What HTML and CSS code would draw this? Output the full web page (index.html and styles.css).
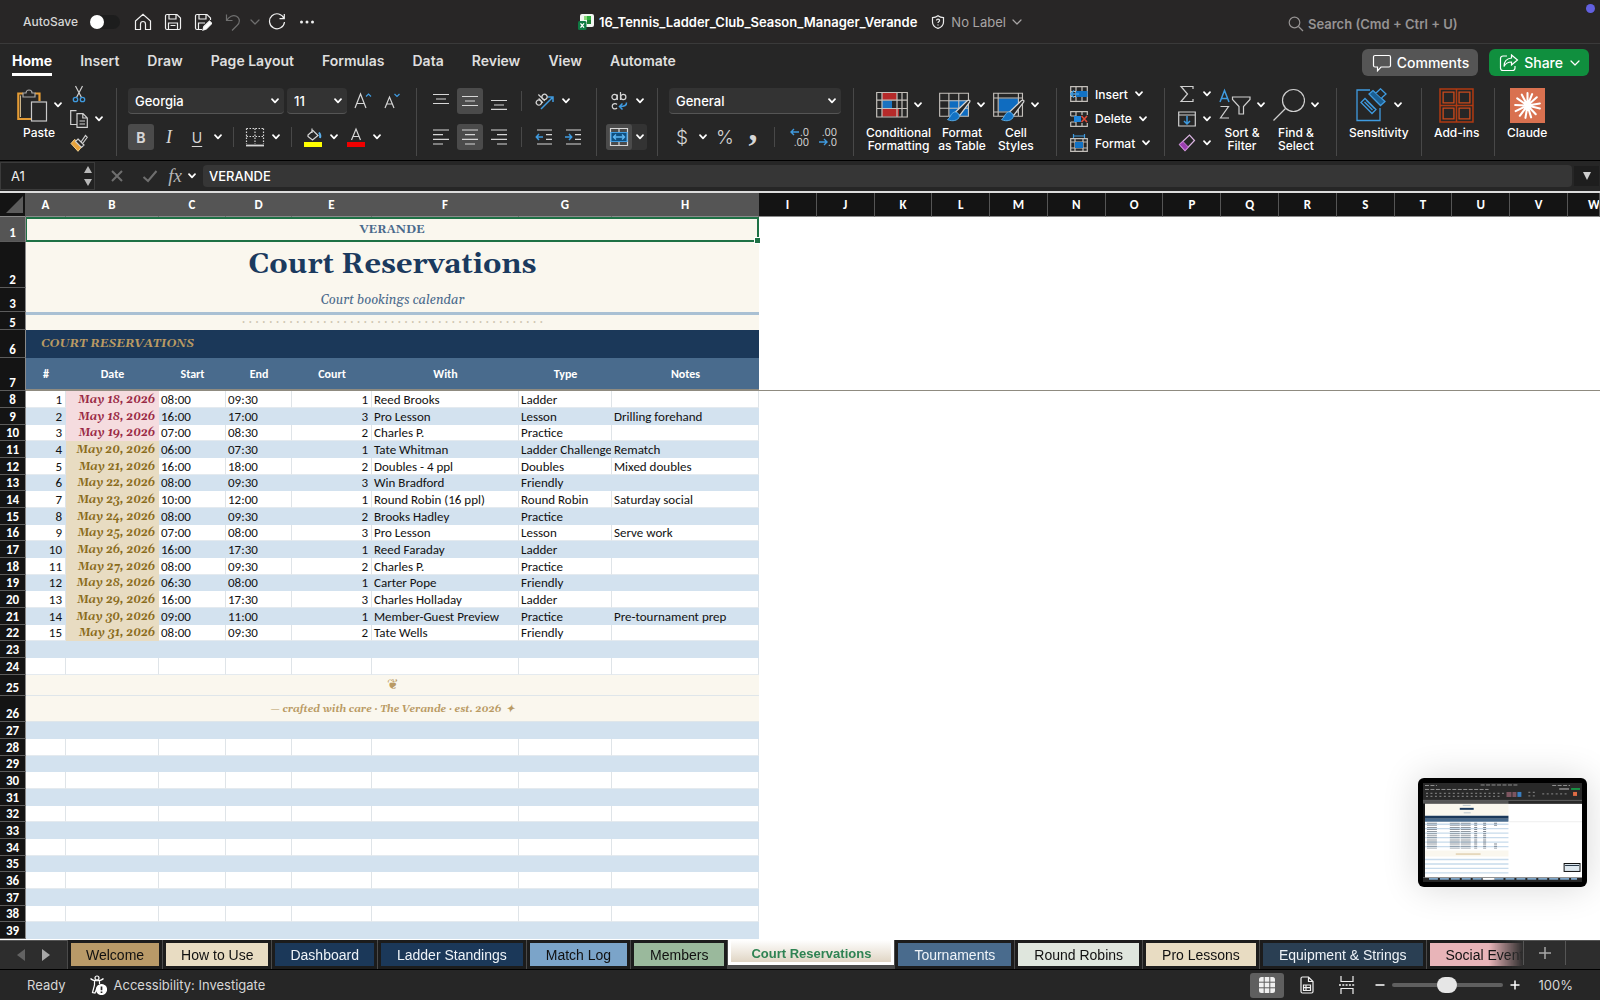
FILE: index.html
```html
<!DOCTYPE html>
<html lang="en">
<head>
<meta charset="utf-8">
<title>16_Tennis_Ladder_Club_Season_Manager_Verande</title>
<link rel="stylesheet" href="styles.css">
</head>
<body>
<svg class="sprite" aria-hidden="true">
  <symbol id="chev" viewBox="0 0 8 6"><path d="M1 1.2 4 4.4 7 1.2" fill="none" stroke="currentColor" stroke-width="1.7" stroke-linecap="round" stroke-linejoin="round"/></symbol>
  <symbol id="chev-thin" viewBox="0 0 10 6"><path d="M1 1 5 5 9 1" fill="none" stroke="currentColor" stroke-width="1.2" stroke-linecap="round" stroke-linejoin="round"/></symbol>
  <symbol id="brush" viewBox="0 0 26 24"><path d="M9 14 L22 1.5 C24 0 25.500 1 24.500 3 L14 17 Z" fill="#262626" stroke="#d4d4d4" stroke-width="1.3"/><path d="M8 13.500 C11 13 14 15.500 13.500 18.500 C12.500 22.500 6 24 1 21.500 C4 20.500 4 15 8 13.500 Z" fill="#1272c4" stroke="#5aaeea" stroke-width="1"/></symbol>
</svg>

<header class="titlebar">
  <div class="quick">
    <label class="autosave">AutoSave <input type="checkbox" role="switch" class="switch"></label>
    <button class="qbtn" aria-label="Home"><svg viewBox="0 0 18 18" class="i18"><path d="M1.500 8 9 1.200 16.500 8V16.500H11.500V11a2.500 2.500 0 0 0-5 0V16.500H1.500Z"/></svg></button>
    <button class="qbtn" aria-label="Save"><svg viewBox="0 0 18 18" class="i18"><path d="M1.500 3a1.500 1.500 0 0 1 1.500-1.500H13L16.500 5V15a1.500 1.500 0 0 1-1.500 1.500H3A1.500 1.500 0 0 1 1.500 15ZM5 1.500V6H12V1.500M4.500 16.500V10H13.500V16.500M6.500 12.500H11.500"/></svg></button>
    <button class="qbtn" aria-label="Save As"><svg viewBox="0 0 18 18" class="i18"><path d="M8 16.500H3A1.500 1.500 0 0 1 1.500 15V3A1.500 1.500 0 0 1 3 1.500H13L16.500 5V7M5 1.500V6H12V1.500M4.500 16.500V10H11"/><path d="M9 17 9.800 13.500 15.500 8l2.300 2.300-5.600 5.600Z" fill="#fff"/></svg></button>
    <button class="qbtn dim" aria-label="Undo"><svg viewBox="0 0 18 18" class="i18"><path d="M2.500 1.500V7.500H8.500M2.800 7.200C5 3.500 9 1.500 12.500 3.200 16.500 5.500 16 10 13 12.500L8 17.500"/></svg></button>
    <svg class="chev-w dim"><use href="#chev-thin"/></svg>
    <button class="qbtn" aria-label="Redo"><svg viewBox="0 0 18 18" class="i18"><path d="M16 5.500A7.500 7.500 0 1 0 16.500 9M16.300 1V5.700H11.500"/></svg></button>
    <button class="qbtn" aria-label="More"><svg viewBox="0 0 18 18" class="i18 solid"><circle cx="3.500" cy="9" r="1.500"/><circle cx="9" cy="9" r="1.500"/><circle cx="14.500" cy="9" r="1.500"/></svg></button>
  </div>
  <div class="doc">
    <svg viewBox="0 0 16 16" class="i16 plain"><rect x="2" y="0" width="14" height="13" rx="2" fill="#f2f6f2"/><path d="M6 2H13V10H9V6H6Z" fill="#2fae3f"/><path d="M9 6H13V10H9Z" fill="#1c7f31"/><path d="M6 2H9V6H6Z" fill="#8bd87b"/><rect x="0" y="7" width="8.500" height="9" rx="1.500" fill="#0f7a43"/><path d="M2.500 9.300 6 13.700M6 9.300 2.500 13.700" stroke="#fff" stroke-width="1.300"/></svg>
    <span class="doc-name">16_Tennis_Ladder_Club_Season_Manager_Verande</span>
    <button class="label-btn"><svg viewBox="0 0 14 14" class="i14"><path d="M7 .8C9 2.300 10.500 2.600 12.500 2.600V7C12.500 10.500 10 12.500 7 13.400 4 12.500 1.500 10.500 1.500 7V2.600C3.500 2.600 5 2.300 7 .8ZM5.500 5.500C5.500 3.700 8.600 3.800 8.500 5.600 8.400 6.700 7 6.600 7 8M7 9.500V10.500"/></svg>No Label<svg class="chev-w"><use href="#chev-thin"/></svg></button>
  </div>
  <label class="search"><svg viewBox="0 0 16 16" class="i16"><circle cx="6.500" cy="6.500" r="5.300"/><path d="M10.500 10.500 15 15"/></svg><input type="search" aria-label="Search" placeholder="Search (Cmd + Ctrl + U)"></label>
  <span class="rec-dot"></span>
</header>

<nav class="menubar">
  <div class="menus">
    <a href="#home" class="current">Home</a><a href="#insert">Insert</a><a href="#draw">Draw</a><a href="#layout">Page Layout</a><a href="#formulas">Formulas</a><a href="#data">Data</a><a href="#review">Review</a><a href="#view">View</a><a href="#automate">Automate</a>
  </div>
  <div class="menu-actions">
    <button class="pill grey"><svg viewBox="0 0 20 18" class="i20"><path d="M3 1.500H17A1.500 1.500 0 0 1 18.500 3V11.500A1.500 1.500 0 0 1 17 13H9L5.500 16.800V13H3A1.500 1.500 0 0 1 1.500 11.500V3A1.500 1.500 0 0 1 3 1.500Z"/></svg>Comments</button>
    <button class="pill green"><svg viewBox="0 0 20 18" class="i20"><path d="M8 2H4A2.500 2.500 0 0 0 1.500 4.500V14A2.500 2.500 0 0 0 4 16.500H13.500A2.500 2.500 0 0 0 16 14V12M12.500 1 18.500 6 12.500 11V8C9 8 6.500 9.500 5 12.500 5 7.500 8 4.500 12.500 4Z"/></svg>Share<svg class="chev-w"><use href="#chev-thin"/></svg></button>
  </div>
</nav>

<section class="ribbon" aria-label="Home ribbon">
  <div class="group g-clip">
    <button class="big"><span class="big-row"><svg viewBox="0 0 32 34" class="ibig"><path d="M7 5.500H2.300V31H15M19 5.500H23.500V13" fill="none" stroke="#e39b35" stroke-width="2.200"/><path d="M4.500 7.500V29" stroke="#f6d9a4" stroke-width=".8"/><path d="M7 9V5H10A3 3 0 0 1 16 5H19V9Z" fill="#262626" stroke="#a8a8a8" stroke-width="1.200"/><rect x="15.500" y="14" width="15" height="19" fill="#262626" stroke="#c9c9c9" stroke-width="1.200"/></svg><svg class="chev"><use href="#chev"/></svg></span>Paste</button>
    <div class="stack">
      <button class="mini" aria-label="Cut"><svg viewBox="0 0 18 18" class="i18 plain"><path d="M5.500 1 11.500 12.500M12.500 1 6.500 12.500" stroke="#d0d0d0" stroke-width="1.200"/><circle cx="5.500" cy="14.500" r="2.200" fill="none" stroke="#3f9be0" stroke-width="1.300"/><circle cx="12.500" cy="14.500" r="2.200" fill="none" stroke="#3f9be0" stroke-width="1.300"/></svg></button>
      <button class="mini" aria-label="Copy"><svg viewBox="0 0 18 18" class="i18"><path d="M6.500 14.500H.7V.7H6.500M7 3.700H13L17.300 8V17.300H7ZM12.800 4V8H17M9.500 11H15M9.500 14H15"/></svg><svg class="chev"><use href="#chev"/></svg></button>
      <button class="mini" aria-label="Format Painter"><svg viewBox="0 0 18 18" class="i18 plain"><path d="M8 8 4.500 5.500 1 9.500 8 17.300 11.500 13Z" fill="#e8a33c" stroke="#f3d08b" stroke-width="1"/><path d="M8 5 14 11 11.500 13.500 5.500 7.500ZM11 8 15.500 1.500 17.300 3.300 13 9" fill="#262626" stroke="#d0d0d0" stroke-width="1.200"/></svg></button>
    </div>
  </div>

  <div class="group two-row g-font">
    <div class="row">
      <label class="pick w156"><select aria-label="Font"><option>Georgia</option></select><svg class="chev"><use href="#chev"/></svg></label>
      <label class="pick w60"><select aria-label="Font size"><option>11</option></select><svg class="chev"><use href="#chev"/></svg></label>
      <button class="tool" aria-label="Increase font size"><svg viewBox="0 0 20 20" class="i20"><path d="M2 17 7.500 3 13 17M4 12.500H11"/><path d="M13 5.500 15.500 3 18 5.500" stroke="#3f9be0"/></svg></button>
      <button class="tool" aria-label="Decrease font size"><svg viewBox="0 0 20 20" class="i20"><path d="M3 17 7.500 6 12 17M4.600 13H10.400"/><path d="M12.500 3 15 5.500 17.500 3" stroke="#3f9be0"/></svg></button>
    </div>
    <div class="row tight">
      <button class="tool on g-bold">B</button>
      <button class="tool g-ital">I</button>
      <button class="tool g-under">U</button><svg class="chev"><use href="#chev"/></svg>
      <i class="vr"></i>
      <button class="tool" aria-label="Borders"><svg viewBox="0 0 20 20" class="i20"><path d="M1.500 1.500H18.500M1.500 9.500H18.500M1.500 1.500V17M10 1.500V17M18.500 1.500V17" stroke-dasharray="1.500 1.500"/><path d="M1 18.500H19" stroke-width="1.800"/></svg></button><svg class="chev"><use href="#chev"/></svg>
      <i class="vr"></i>
      <button class="tool" aria-label="Fill color"><svg viewBox="0 0 20 20" class="i20"><path d="M9 1.500V6M5 8 10 3.500 15 8.500 9.500 13 5 9.500Z"/><path d="M16 5.500Q18 8 17 11" stroke="#5aaeea" stroke-width="2"/><path d="M1 15H19V20H1Z" fill="#ff0" stroke="none"/></svg></button><svg class="chev"><use href="#chev"/></svg>
      <button class="tool" aria-label="Font color"><svg viewBox="0 0 20 20" class="i20"><path d="M5.500 13 10 2 14.500 13M7 9.500H13"/><path d="M1 15H19V20H1Z" fill="#f00000" stroke="none"/></svg></button><svg class="chev"><use href="#chev"/></svg>
    </div>
  </div>

  <div class="group two-row g-align">
    <div class="row">
      <button class="tool" aria-label="Top align"><svg viewBox="0 0 18 18" class="i18"><path d="M1 2.500H17M4 7H14M1 11.500H17"/></svg></button>
      <button class="tool on" aria-label="Middle align"><svg viewBox="0 0 18 18" class="i18"><path d="M1 4.500H17M4 9H14M1 13.500H17"/></svg></button>
      <button class="tool" aria-label="Bottom align"><svg viewBox="0 0 18 18" class="i18"><path d="M1 8.500H17M4 13H14M1 17.300H17"/></svg></button>
      <i class="vr"></i>
      <button class="tool" aria-label="Orientation"><svg viewBox="0 0 20 20" class="i20"><g transform="rotate(-45 7 8)"><circle cx="3" cy="9" r="2.600"/><path d="M5.700 6V12M8.300 3V12"/><circle cx="11" cy="9" r="2.600"/></g><path d="M7 18 18.500 6.500M14 6H19V11" stroke="#3f9be0" stroke-width="1.500"/></svg></button><svg class="chev"><use href="#chev"/></svg>
    </div>
    <div class="row">
      <button class="tool" aria-label="Align left"><svg viewBox="0 0 18 18" class="i18"><path d="M1 2H17M1 6.700H11M1 11.400H17M1 16H11"/></svg></button>
      <button class="tool on" aria-label="Center"><svg viewBox="0 0 18 18" class="i18"><path d="M1 2H17M4 6.700H14M1 11.400H17M4 16H14"/></svg></button>
      <button class="tool" aria-label="Align right"><svg viewBox="0 0 18 18" class="i18"><path d="M1 2H17M7 6.700H17M1 11.400H17M7 16H17"/></svg></button>
      <i class="vr"></i>
      <button class="tool" aria-label="Decrease indent"><svg viewBox="0 0 18 18" class="i18"><path d="M2 2H17M11 6.700H17M11 11.400H17M2 16H17"/><path d="M8 9H1.500M4 6 1.300 9 4 12" stroke="#3f9be0" stroke-width="1.500"/></svg></button>
      <button class="tool" aria-label="Increase indent"><svg viewBox="0 0 18 18" class="i18"><path d="M2 2H17M11 6.700H17M11 11.400H17M2 16H17"/><path d="M1 9H7.500M5 6 7.700 9 5 12" stroke="#3f9be0" stroke-width="1.500"/></svg></button>
    </div>
  </div>

  <div class="group two-row g-wrap">
    <div class="row tight">
      <button class="tool" aria-label="Wrap text"><svg viewBox="0 0 20 20" class="i20"><circle cx="5.500" cy="6" r="2.600"/><path d="M8.300 3.500V9M11.500 1V9"/><circle cx="14.300" cy="6" r="2.600"/><path d="M8 13.500A2.700 2.700 0 1 0 8 17"/><path d="M17.500 11.500Q18 15.500 11 15.500M13.500 12.500 10.500 15.500 13.500 18.500" stroke="#3f9be0" stroke-width="1.500"/></svg></button><svg class="chev"><use href="#chev"/></svg>
    </div>
    <div class="row tight split">
      <button class="tool on" aria-label="Merge and center"><svg viewBox="0 0 20 20" class="i20"><path d="M1.500 1.500H18.500V18.500H1.500ZM10 1.500V5M10 15V18.500"/><path d="M2 5.500H18V14.500H2Z" fill="#0f4f80" stroke="#3f9be0"/><path d="M4.500 10H15.500M7 7.500 4.500 10 7 12.500M13 7.500 15.500 10 13 12.500" stroke="#5db6f2" stroke-width="1.400"/></svg></button><svg class="chev"><use href="#chev"/></svg>
    </div>
  </div>

  <div class="group two-row g-num">
    <div class="row">
      <label class="pick w172"><select aria-label="Number format"><option>General</option></select><svg class="chev"><use href="#chev"/></svg></label>
    </div>
    <div class="row tight">
      <button class="tool g-cur">$</button><svg class="chev"><use href="#chev"/></svg>
      <button class="tool g-cur">%</button>
      <button class="tool g-comma">,</button>
      <i class="vr"></i>
      <button class="tool g-dec" aria-label="Increase decimal"><span><svg viewBox="0 0 10 8" class="arr"><path d="M9 4H1M4 1 1 4 4 7"/></svg>.0</span><span>.00</span></button>
      <button class="tool g-dec" aria-label="Decrease decimal"><span>.00</span><span><svg viewBox="0 0 10 8" class="arr"><path d="M1 4H9M6 1 9 4 6 7"/></svg>.0</span></button>
    </div>
  </div>

  <div class="group g-styles">
    <button class="big"><span class="big-row"><svg viewBox="0 0 32 34" class="ibig"><path d="M6 5V12H21V5ZM6 20.500V28.500H23V20.500Z" fill="#b62a2a"/><path d="M6 12.500H16V20H6Z" fill="#1a73c0"/><path d="M.7 4.500H31.300V29H.7ZM.7 12.200H31.300M.7 20.500H31.300M6 4.500V29M21 4.500V29M26 4.500V29" class="grid-l"/></svg><svg class="chev"><use href="#chev"/></svg></span>Conditional<br>Formatting</button>
    <button class="big"><span class="big-row"><svg viewBox="0 0 34 34" class="ibig"><path d="M11 12H31.500V29H11Z" fill="#0f6cc0"/><path d="M.7 4.500H31.300V29H.7ZM.7 12.500H31.300M.7 20.500H31.300M10.500 4.500V29M21 4.500V29" class="grid-l"/><use href="#brush" x="8" y="11" width="26" height="24"/></svg><svg class="chev"><use href="#chev"/></svg></span>Format<br>as Table</button>
    <button class="big"><span class="big-row"><svg viewBox="0 0 34 34" class="ibig"><path d="M6 10H27V24H6Z" fill="#0f6cc0"/><path d="M.7 4.500H31.300V29H.7ZM.7 9.500H31.300M5.500 4.500V29M27 4.500V29M.7 24.500H27" class="grid-l"/><use href="#brush" x="8" y="11" width="26" height="24"/></svg><svg class="chev"><use href="#chev"/></svg></span>Cell<br>Styles</button>
  </div>

  <div class="group g-cells">
    <div class="stack">
      <button class="mini"><svg viewBox="0 0 18 16" class="i18 plain"><path d="M.7 .7H17.300V15.300H.7ZM.7 5.500H17.300M.7 10.500H17.300M6 .7V15.300M12 .7V15.300" class="grid-l"/><path d="M6 5H17.500V11H6Z" fill="#1272c4"/><path d="M9 8H1M4 4.500 .8 8 4 11.500" fill="none" stroke="#3f9be0" stroke-width="1.500"/></svg>Insert<svg class="chev"><use href="#chev"/></svg></button>
      <button class="mini"><svg viewBox="0 0 18 16" class="i18 plain"><path d="M.7 5V.7H17.300V4M.7 11V15.300H17.300V12M6 .7V5M12 .7V4M6 11V15.300M12 12V15.300M.7 5H6M.7 11H6" class="grid-l"/><path d="M4 5H11V11H4Z" fill="#1f86dc"/><path d="M11.500 5 17 11M17 5 11.500 11" stroke="#e04b3a" stroke-width="1.600"/></svg>Delete<svg class="chev"><use href="#chev"/></svg></button>
      <button class="mini"><svg viewBox="0 0 18 18" class="i18 plain"><path d="M3.500 2H14.500M3.500 0V4M14.500 0V4" stroke="#3f9be0" stroke-width="1.200"/><path d="M.7 4.700H17.300V17.300H.7ZM.7 8H17.300M.7 14H17.300M5 4.700V17.300M13 4.700V17.300" class="grid-l"/><path d="M5 8H13V14H5Z" fill="#1272c4"/></svg>Format<svg class="chev"><use href="#chev"/></svg></button>
    </div>
  </div>

  <div class="group g-edit">
    <div class="stack">
      <button class="mini" aria-label="AutoSum"><svg viewBox="0 0 18 18" class="i18"><path d="M15 4V1.500H3L9.500 9 3 16.500H15V14"/></svg><svg class="chev"><use href="#chev"/></svg></button>
      <button class="mini" aria-label="Fill"><svg viewBox="0 0 18 18" class="i18"><path d="M.7 2H17.300V16H.7ZM.7 5H17.300"/><path d="M9 6V14M6 11 9 14 12 11" stroke="#3f9be0" stroke-width="1.500"/></svg><svg class="chev"><use href="#chev"/></svg></button>
      <button class="mini" aria-label="Clear"><svg viewBox="0 0 18 18" class="i18 plain"><path d="M1.500 10.500 11.500 1 16.500 6.500 7 16.500Z" fill="#262626" stroke="#dcb5e4" stroke-width="1.200"/><path d="M1.500 10.500 5 7.500 10.300 13 7 16.500Z" fill="#9b3fb0" stroke="#c779d6" stroke-width="1"/></svg><svg class="chev"><use href="#chev"/></svg></button>
    </div>
    <button class="big"><span class="big-row"><svg viewBox="0 0 32 34" class="ibig"><path d="M1 14 5.500 2.500 10 14M2.500 10.500H8.500" fill="none" stroke="#3f9be0" stroke-width="1.500"/><path d="M1.500 18.500H9.500L1.500 30H10" class="line"/><path d="M13.500 9H31V11.500L24.500 18.500V26H20V18.500L13.500 11.500Z" class="line"/></svg><svg class="chev"><use href="#chev"/></svg></span>Sort &amp;<br>Filter</button>
    <button class="big"><span class="big-row"><svg viewBox="0 0 32 34" class="ibig"><circle cx="20.500" cy="12.500" r="11" class="line"/><path d="M12.500 20.500 .5 32.500" class="line"/></svg><svg class="chev"><use href="#chev"/></svg></span>Find &amp;<br>Select</button>
  </div>

  <div class="group g-sens">
    <button class="big"><span class="big-row"><svg viewBox="0 0 32 34" class="ibig"><path d="M14 2H1V32.500H24V20" fill="none" stroke="#3f9be0" stroke-width="1.300"/><path d="M5 14.500 9 10.500 20 21.500 16 25.500ZM8.500 14 16.500 22M10.500 12.500 18.500 20.500" fill="none" stroke="#3f9be0" stroke-width="1.300"/><path d="M13 6 17 2.500 29 13.500 24.500 17.500Z" fill="#1b5f93" stroke="#3f9be0" stroke-width="1.300"/><path d="M20 5 24.500 .8 30 6 25.500 10" fill="#262626" stroke="#3f9be0" stroke-width="1.300"/></svg><svg class="chev"><use href="#chev"/></svg></span>Sensitivity</button>
  </div>
  <div class="group g-add">
    <button class="big"><span class="big-row"><svg viewBox="0 0 34 34" class="ibig34"><path d="M1 1H33V33H1ZM17 1V33M1 17H33" fill="none" stroke="#b03a12" stroke-width="1.500"/><path d="M4 4H14.500V14.500H4ZM19.500 4H30V14.500H19.500ZM4 19.500H14.500V30H4ZM19.500 19.500H30V30H19.500Z" fill="none" stroke="#c94a1c" stroke-width="1.300"/></svg></span>Add-ins</button>
  </div>
  <div class="group g-claude">
    <button class="big"><span class="big-row"><svg viewBox="0 0 34 34" class="ibig34"><path d="M0 0H34V34H0Z" fill="#d97150"/><path d="M17 17V5M17 17 21.500 6M17 17 26 9M17 17 29 15M17 17 29 20M17 17 25 25.500M17 17 20.500 28.500M17 17 15 29M17 17 9.500 27M17 17 5.500 22.500M17 17 5 16.500M17 17 7 10M17 17 11.500 6.500" stroke="#fff" stroke-width="2" stroke-linecap="round"/></svg></span>Claude</button>
  </div>
</section>

<div class="formula-bar">
  <label class="name-box"><input type="text" aria-label="Name box" value="A1"><svg viewBox="0 0 8 20" class="spin"><path d="M4 0 8 7H0ZM4 20 0 13H8Z"/></svg></label>
  <button class="fx-btn cancel dim" aria-label="Cancel"><svg viewBox="0 0 14 14" class="i14 thick"><path d="M2 2 12 12M12 2 2 12"/></svg></button>
  <button class="fx-btn enter dim" aria-label="Enter"><svg viewBox="0 0 16 14" class="i16 thick"><path d="M1.500 8 6 12 14.500 2"/></svg></button>
  <button class="fx-btn fx"><em>fx</em><svg class="chev"><use href="#chev"/></svg></button>
  <input type="text" class="formula" aria-label="Formula" value="VERANDE">
  <button class="expand" aria-label="Expand formula bar"><svg viewBox="0 0 8 8" class="tri"><path d="M0 0H8L4 8Z"/></svg></button>
</div>

<main class="sheet">
<table class="cells">
  <colgroup><col class="c-row"><col class="c-a"><col class="c-b"><col class="c-c"><col class="c-d"><col class="c-e"><col class="c-f"><col class="c-g"><col class="c-h"><col span="14"><col class="c-last"></colgroup>
  <thead>
    <tr><th class="corner"><svg viewBox="0 0 18 18" class="i18 plain"><path d="M18 0V17H1Z" fill="#5c5c5c"/></svg></th><th class="sel">A<th class="sel">B<th class="sel">C<th class="sel">D<th class="sel">E<th class="sel">F<th class="sel">G<th class="sel">H<th>I<th>J<th>K<th>L<th>M<th>N<th>O<th>P<th>Q<th>R<th>S<th>T<th>U<th>V<th class="last">W</tr>
  </thead>
  <tbody class="head">
    <tr class="r1"><th class="sel">1</th><td colspan="8" class="brand"><div class="picked">VERANDE<span class="handle"></span></div></td></tr>
    <tr class="r2"><th>2</th><td colspan="8" class="title">Court Reservations</td></tr>
    <tr class="r3"><th>3</th><td colspan="8" class="subtitle">Court bookings calendar</td></tr>
    <tr class="r4"><th></th><td colspan="8" class="rule"></td></tr>
    <tr class="r5"><th>5</th><td colspan="8" class="dots">· · · · · · · · · · · · · · · · · · · · · · · · · · · · · · · · · · · · · · · · · · · · ·</td></tr>
    <tr class="r6"><th>6</th><td colspan="8" class="section">COURT RESERVATIONS</td></tr>
    <tr class="r7"><th>7</th><td>#<td>Date<td>Start<td>End<td>Court<td>With<td>Type<td>Notes<td colspan="15" class="freeze"></tr>
  </tbody>
  <tbody class="data">
    <tr><th>8<td>1<td class="soon">May 18, 2026<td>08:00<td>09:30<td>1<td>Reed Brooks<td>Ladder<td></tr>
    <tr><th>9<td>2<td class="soon">May 18, 2026<td>16:00<td>17:00<td>3<td>Pro Lesson<td>Lesson<td>Drilling forehand</tr>
    <tr><th>10<td>3<td class="soon">May 19, 2026<td>07:00<td>08:30<td>2<td>Charles P.<td>Practice<td></tr>
    <tr><th>11<td>4<td>May 20, 2026<td>06:00<td>07:30<td>1<td>Tate Whitman<td>Ladder Challenge<td>Rematch</tr>
    <tr><th>12<td>5<td>May 21, 2026<td>16:00<td>18:00<td>2<td>Doubles - 4 ppl<td>Doubles<td>Mixed doubles</tr>
    <tr><th>13<td>6<td>May 22, 2026<td>08:00<td>09:30<td>3<td>Win Bradford<td>Friendly<td></tr>
    <tr><th>14<td>7<td>May 23, 2026<td>10:00<td>12:00<td>1<td>Round Robin (16 ppl)<td>Round Robin<td>Saturday social</tr>
    <tr><th>15<td>8<td>May 24, 2026<td>08:00<td>09:30<td>2<td>Brooks Hadley<td>Practice<td></tr>
    <tr><th>16<td>9<td>May 25, 2026<td>07:00<td>08:00<td>3<td>Pro Lesson<td>Lesson<td>Serve work</tr>
    <tr><th>17<td>10<td>May 26, 2026<td>16:00<td>17:30<td>1<td>Reed Faraday<td>Ladder<td></tr>
    <tr><th>18<td>11<td>May 27, 2026<td>08:00<td>09:30<td>2<td>Charles P.<td>Practice<td></tr>
    <tr><th>19<td>12<td>May 28, 2026<td>06:30<td>08:00<td>1<td>Carter Pope<td>Friendly<td></tr>
    <tr><th>20<td>13<td>May 29, 2026<td>16:00<td>17:30<td>3<td>Charles Holladay<td>Ladder<td></tr>
    <tr><th>21<td>14<td>May 30, 2026<td>09:00<td>11:00<td>1<td>Member-Guest Preview<td>Practice<td>Pre-tournament prep</tr>
    <tr><th>22<td>15<td>May 31, 2026<td>08:00<td>09:30<td>2<td>Tate Wells<td>Friendly<td></tr>
  </tbody>
  <tbody class="empty">
    <tr><th>23<td><td><td><td><td><td><td><td></tr>
    <tr><th>24<td><td><td><td><td><td><td><td></tr>
  </tbody>
  <tbody class="foot">
    <tr class="r25"><th>25</th><td colspan="8" class="leaf">❦</td></tr>
    <tr class="r26"><th>26</th><td colspan="8" class="crafted">— crafted with care · The Verande · est. 2026 &nbsp;✦</td></tr>
  </tbody>
  <tbody class="empty">
    <tr><th>27<td><td><td><td><td><td><td><td></tr>
    <tr><th>28<td><td><td><td><td><td><td><td></tr>
    <tr><th>29<td><td><td><td><td><td><td><td></tr>
    <tr><th>30<td><td><td><td><td><td><td><td></tr>
    <tr><th>31<td><td><td><td><td><td><td><td></tr>
    <tr><th>32<td><td><td><td><td><td><td><td></tr>
    <tr><th>33<td><td><td><td><td><td><td><td></tr>
    <tr><th>34<td><td><td><td><td><td><td><td></tr>
    <tr><th>35<td><td><td><td><td><td><td><td></tr>
    <tr><th>36<td><td><td><td><td><td><td><td></tr>
    <tr><th>37<td><td><td><td><td><td><td><td></tr>
    <tr><th>38<td><td><td><td><td><td><td><td></tr>
    <tr><th>39<td><td><td><td><td><td><td><td></tr>
  </tbody>
</table>
</main>

<nav class="tabs" aria-label="Sheets">
  <div class="tab-nav">
    <button aria-label="Previous sheet" class="dim"><svg viewBox="0 0 8 12" class="tri12"><path d="M8 0V12L0 6Z"/></svg></button>
    <button aria-label="Next sheet"><svg viewBox="0 0 8 12" class="tri12"><path d="M0 0V12L8 6Z"/></svg></button>
  </div>
  <div class="tab-list">
    <button class="tab gold">Welcome</button>
    <button class="tab cream">How to Use</button>
    <button class="tab navy">Dashboard</button>
    <button class="tab navy">Ladder Standings</button>
    <button class="tab sky">Match Log</button>
    <button class="tab sage">Members</button>
    <button class="tab active">Court Reservations</button>
    <button class="tab steel">Tournaments</button>
    <button class="tab mist">Round Robins</button>
    <button class="tab cream">Pro Lessons</button>
    <button class="tab slate">Equipment &amp; Strings</button>
    <button class="tab rose">Social Events</button>
  </div>
  <button class="add" aria-label="New sheet"><svg viewBox="0 0 12 12" class="i12"><path d="M6 0V12M0 6H12"/></svg></button>
</nav>

<footer class="status">
  <span>Ready</span>
  <button class="access"><svg viewBox="0 0 18 20" class="i20"><circle cx="8" cy="3" r="2"/><path d="M1.500 3.500C4 6.500 12 6.500 14.500 3.500M5.500 6V10L3.500 17.500 6 18 8 13M10.500 6V9"/><circle cx="12.500" cy="14.500" r="5" fill="#fff"/><path d="M12.500 11.500V15.200M12.500 16.500V18" stroke="#262626" stroke-width="1.700"/></svg>Accessibility: Investigate</button>
  <div class="views">
    <button class="view on" aria-label="Normal view"><svg viewBox="0 0 16 16" class="i16 solid"><rect width="16" height="16" rx="2.500"/><path d="M0 5.200H16M0 10.800H16M5.200 0V16M10.800 0V16" stroke="#5f5f5f" stroke-width="1"/></svg></button>
    <button class="view" aria-label="Page layout"><svg viewBox="0 0 14 18" class="i18"><path d="M1 2.500A1.500 1.500 0 0 1 2.500 1H8.500L13 5.500V15.500A1.500 1.500 0 0 1 11.500 17H2.500A1.500 1.500 0 0 1 1 15.500ZM8.500 1V5.500H13M3.500 9H10.500V14.500H3.500ZM3.500 11.700H10.500M6 9V14.500"/></svg></button>
    <button class="view" aria-label="Page break"><svg viewBox="0 0 18 18" class="i18"><path d="M3 0V5.500H15V0M3 18V12.500H15V18"/><path d="M1 9H17" stroke-dasharray="2 1.300" stroke-width="1.500"/></svg></button>
  </div>
  <div class="zoom">
    <button aria-label="Zoom out"><svg viewBox="0 0 10 10" class="i10"><path d="M.5 5H9.500"/></svg></button>
    <input type="range" aria-label="Zoom" min="10" max="190" value="100">
    <button aria-label="Zoom in"><svg viewBox="0 0 10 10" class="i10"><path d="M.5 5H9.500M5 .5V9.500"/></svg></button>
    <span class="pct">100%</span>
  </div>
</footer>

<aside class="preview" aria-label="Screen preview">
  <svg viewBox="0 0 160 100">
    <rect width="160" height="100" fill="#fff"/>
    <rect width="160" height="21" fill="#292929"/>
    <path d="M2 2.500H14M58 2H96M130 2.500H148M2 6.500H66" stroke="#aaa" stroke-width=".8" stroke-dasharray="4 1.500"/>
    <path d="M3 10.500H84M3 13.500H78M106 9.500H114M106 13H114M120 11H146" stroke="#777" stroke-width="1.200" stroke-dasharray="2 2.500"/>
    <path d="M84 9H89V14H84ZM90 9H94V14H90Z" fill="#7d5560"/><path d="M95 9H99V14H95Z" fill="#3a7ec0"/><path d="M137 5H147V7H137Z" fill="#777"/><path d="M149 5H158V7H149Z" fill="#189044"/><path d="M151 9H155V13H151Z" fill="#e06c45"/>
    <path d="M0 17.500H160" stroke="#999" stroke-width=".5"/><path d="M0 18H86V20H0Z" fill="#555"/>
    <path d="M2 21H86V33H2Z" fill="#faf7ee"/>
    <path d="M37 26H51" stroke="#1b3a5e" stroke-width="2"/><path d="M41 30H48M40 22.500H48" stroke="#8ba0b5" stroke-width=".6"/>
    <path d="M2 33H86V36H2Z" fill="#1b3859"/><path d="M2 36H86V39H2Z" fill="#496b8d"/>
    <path d="M2 41.500H86M2 46H86M2 50.500H86M2 55H86M2 59.500H86M2 64H86M2 77H86M2 81.500H86M2 86H86M2 90.500H86" stroke="#c8dbec" stroke-width="1.300"/>
    <path d="M9 40V66M32 40V66M43 40V66" stroke="#4b5866" stroke-width="10" stroke-dasharray="1 1.100" opacity=".6"/><path d="M53 40V66M62 40V66M73 40V43M73 61V66" stroke="#4b5866" stroke-width="3" stroke-dasharray="1 1.100" opacity=".7"/>
    <path d="M2 68H86V74H2Z" fill="#faf7ee"/><path d="M33 71.500H58" stroke="#c5a56e" stroke-width=".7"/>
    <path d="M86 39H160" stroke="#ddd" stroke-width=".5"/>
    <path d="M0 21H2V95H0Z" fill="#141414"/><path d="M0 95H160V100H0Z" fill="#262626"/>
    <path d="M6 96.500H155" stroke="#7fa6c9" stroke-width="1.800" stroke-dasharray="9 2"/><path d="M60 96.500H72" stroke="#fff" stroke-width="1.800"/>
    <rect x="142" y="81" width="16" height="8" fill="#dfe9f0" stroke="#111"/><path d="M143 83H157" stroke="#234" stroke-width="1"/>
  </svg>
</aside>
</body>
</html>
```
FILE: styles.css
```css
* { box-sizing: border-box; }

html, body { height: 100%; margin: 0; }

body {
  display: flex;
  flex-direction: column;
  overflow: hidden;
  background: #262626;
  color: #f0f0f0;
  font-family: Inter, "Liberation Sans", sans-serif;
  font-size: 13px;
}

button, input, select {
  margin: 0;
  padding: 0;
  border: 0;
  background: none;
  color: inherit;
  font: inherit;
  outline: 0;
}

/* icons */
.sprite { position: absolute; width: 0; height: 0; }
svg { display: block; flex: none; }
.i10, .i12, .i14, .i16, .i18, .i20 { fill: none; stroke: currentColor; stroke-width: 1.2; }
.i10 { width: 10px; height: 10px; stroke-width: 1.5; }
.i12 { width: 12px; height: 12px; stroke-width: 1.5; }
.i14 { width: 14px; height: 14px; }
.i16 { width: 16px; height: 16px; }
.i18 { width: 18px; height: 18px; }
.i20 { width: 20px; height: 20px; }
.plain { stroke: none; fill: none; }
.solid { stroke: none; fill: currentColor; }
.thick { stroke-width: 2; }
.ibig { width: 32px; height: 34px; }
.ibig34 { width: 35px; height: 35px; }
.chev { width: 8px; height: 6px; color: #fff; }
.chev-w { width: 10px; height: 6px; }
.grid-l { fill: none; stroke: #c4c0bb; stroke-width: 1.2; }
.line { fill: none; stroke: #cfcfcf; stroke-width: 1.2; }
.dim { color: #6f6f6f; }

/* title bar */
.titlebar {
  display: grid;
  grid-template-columns: 1fr auto 1fr;
  align-items: center;
  height: 44px;
  flex: none;
  padding: 0 23px;
  background: #282626;
  border-bottom: 1px solid #3a3a3a;
}
.quick { display: flex; align-items: center; gap: 12px; }
.autosave { display: flex; align-items: center; gap: 12px; margin-right: 2px; font-size: 12px; font-weight: 500; color: #d6d6d6; }
.switch { appearance: none; display: flex; align-items: center; width: 30px; height: 14px; border-radius: 7px; background: #1d1d1d; }
.switch::before { content: ""; width: 14px; height: 14px; border-radius: 7px; background: #fff; }
.qbtn + .chev-w { margin: 0 -4px; }
.doc { display: flex; align-items: center; gap: 5px; font-size: 13px; }
.doc-name { font-weight: 600; color: #fff; }
.label-btn { display: flex; align-items: center; gap: 6px; margin-left: 9px; color: #a8a5a5; }
.label-btn .i14 { color: #ececec; }
.search { display: flex; align-items: center; gap: 4px; justify-self: end; width: 289px; padding-top: 4px; color: #969393; font-size: 13px; font-weight: 600; }
.search input { flex: 1; min-width: 0; appearance: none; }
.search input::placeholder { color: #969393; opacity: 1; }
.rec-dot { position: absolute; top: 4px; right: 5px; width: 9px; height: 9px; border-radius: 5px; background: #6260e0; }

/* menu bar */
.menubar { display: flex; justify-content: space-between; flex: none; height: 36px; padding: 0 11px 0 12px; }
.menus { display: flex; gap: 28px; font-size: 14px; font-weight: 600; }
.menus a { color: #dedede; text-decoration: none; white-space: nowrap; height: 32px; line-height: 33px; }
.menus .current { color: #fff; font-weight: 700; border-bottom: 3px solid #fff; }
.menu-actions { display: flex; gap: 11px; padding-top: 5px; }
.pill { display: flex; align-items: center; gap: 5px; height: 27px; padding: 0 9px 0 10px; border-radius: 6px; font-size: 14px; font-weight: 500; color: #fff; }
.pill .i20 { height: 18px; }
.pill .chev-w { margin-left: 2px; }
.grey { background: #555; }
.green { background: #108f3e; }

/* ribbon */
.ribbon { display: flex; flex: none; height: 81px; padding-top: 8px; border-bottom: 1px solid #000; }
.group { display: flex; height: 68px; flex: none; border-right: 1px solid #484848; }
.two-row { flex-direction: column; gap: 10px; }
.row { display: flex; align-items: center; gap: 3px; height: 26px; }
.tool { display: flex; align-items: center; justify-content: center; width: 26px; height: 26px; border-radius: 3px; color: #d6d6d6; flex: none; }
.tool.on { background: #4b4b4b; }
.row .tool + .chev { margin: 0 3px 0 2px; }
.vr { width: 1px; height: 20px; margin: 0 6px; background: #484848; }
.tight { gap: 2px; }

.big { display: flex; flex-direction: column; align-items: center; font-size: 12px; line-height: 13px; font-weight: 500; color: #fff; }
.big-row { display: flex; align-items: center; gap: 6px; height: 34px; margin-bottom: 4px; }
.stack { display: flex; flex-direction: column; justify-content: space-between; height: 67px; margin-top: -3px; }
.mini { display: flex; align-items: center; height: 18px; gap: 7px; font-size: 12px; font-weight: 500; color: #fff; }
.mini .i18 { color: #d0d0d0; }

.g-clip { width: 117px; padding-left: 16px; gap: 8px; }
.g-clip .big { width: 46px; }
.g-font { width: 300px; padding-left: 11px; }
.g-align { width: 180px; padding-left: 11px; }
.g-wrap { width: 61px; padding-left: 9px; }
.g-wrap .split { align-self: flex-start; background: #333; border-radius: 3px; }
.g-num { width: 196px; padding-left: 11px; }
.g-styles { width: 203px; padding-left: 12px; gap: 7px; }
.g-cells { width: 108px; padding-left: 13px; }
.g-edit { width: 172px; padding-left: 13px; gap: 8px; }
.g-sens { width: 85px; padding-left: 12px; }
.g-add { width: 73px; padding-left: 12px; }
.g-claude { padding-left: 12px; border: 0; }

.pick { display: grid; align-items: center; height: 26px; background: #333; border-bottom: 1px solid #555; border-radius: 4px; font-size: 13px; font-weight: 500; color: #fff; }
.pick select, .pick .chev { grid-area: 1 / 1; }
.pick select { appearance: none; width: 100%; height: 100%; padding-left: 7px; }
.pick option { background: #333; }
.pick .chev { justify-self: end; margin-right: 5px; pointer-events: none; }
.w156 { width: 156px; }
.w60 { width: 60px; }
.w172 { width: 172px; }
.g-bold { font-size: 14px; font-weight: 700; }
.g-ital { font: italic 18px "Liberation Serif", serif; }
.g-under { font-size: 14px; text-decoration: underline; text-underline-offset: 3px; }
.g-cur { font-size: 19px; font-weight: 300; }
.g-comma { font: bold 36px/10px "Liberation Serif", serif; padding-bottom: 18px; }
.g-dec { flex-direction: column; align-items: flex-end; font-size: 10px; line-height: 11px; }
.g-dec span { display: flex; align-items: center; height: 10px; }
.arr { width: 10px; height: 8px; fill: none; stroke: #3f9be0; stroke-width: 1.4; }

/* formula bar */
.formula-bar { display: flex; align-items: center; flex: none; height: 32px; border-bottom: 2px solid #dcdcdc; background: #262626; }
.name-box { display: flex; align-items: center; width: 95px; height: 28px; padding: 0 2px 0 10px; border: 1px solid #3b3b3b; background: #222; font-size: 13px; }
.name-box input { flex: 1; min-width: 0; }
.spin { width: 8px; height: 20px; fill: #b9b9b9; }
.fx-btn { display: flex; align-items: center; justify-content: center; }
.cancel { width: 44px; }
.enter { width: 22px; }
.fx { gap: 6px; width: 42px; color: #b5b5b5; font: 19px "Liberation Serif", serif; }
.formula { flex: 1; height: 22px; padding-left: 6px; border-radius: 4px; background: #363636; font-size: 13px; font-weight: 500; color: #fff; }
.expand { display: flex; align-items: center; justify-content: center; width: 25px; height: 20px; margin: 0 1px 0 2px; background: #1e1e1e; }
.tri { width: 8px; height: 8px; fill: #cfcfcf; }

/* worksheet */
.sheet { flex: 1; min-height: 0; overflow: hidden; background: #fff; color: #111; }
.cells { width: 100%; table-layout: fixed; border-collapse: separate; border-spacing: 0; font-family: Calibri, Carlito, Lato, sans-serif; font-size: 13px; line-height: 14px; }
.c-row { width: 26px; }
.c-a { width: 40px; }
.c-b, .c-g { width: 93px; }
.c-c { width: 67px; }
.c-d { width: 66px; }
.c-e { width: 80px; }
.c-f, .c-h { width: 147px; }
.c-last { width: 32px; }
.cells th, .cells td { padding: 0; overflow: hidden; white-space: nowrap; }
.cells th { background: #141414; color: #fff; font-weight: 700; border-right: 1px solid #555; }
.cells thead th { height: 24px; border-bottom: 1px solid #8a8a8a; }
.cells thead .sel { background: #555; border-right-color: #555; }
.cells thead .last { padding-left: 20px; }
.cells thead .corner { text-align: right; }
.corner svg { margin: 0 2px 0 auto; }
.cells tbody th { vertical-align: bottom; border-bottom: 1px solid #5c5c5c; border-right-color: #8a8a8a; }
.cells tbody th.sel { background: #555; padding-bottom: 1px; }

.r1 { height: 25px; }
.r2 { height: 46px; }
.r3 { height: 24px; }
.r4 { height: 3px; }
.r5 { height: 15px; }
.r6 { height: 28px; }
.r7 { height: 33px; }
.r25 { height: 21px; }
.r26 { height: 26px; }
.cells .r4 th { border-bottom: 0; }
.r4 { font-size: 0; line-height: 0; }
.r5 { line-height: 12px; }

.head td, .foot td { background: #faf7ee; font-family: Georgia, Gelasio, "Liberation Serif", serif; text-align: center; }
.picked { position: relative; height: 25px; line-height: 21px; border: 2px solid #1e7145; border-left-width: 1px; }
.cells .brand { overflow: visible; color: #4a6a8c; font-size: 12px; font-weight: 700; }
.handle { position: absolute; right: -4px; bottom: -4px; width: 7px; height: 7px; border: 1px solid #fff; background: #1e7145; }
.head .title { color: #1b3a5e; font-size: 29px; line-height: 40px; font-weight: 700; }
.head .subtitle { color: #4a6a8c; font-size: 13px; font-style: italic; }
.head .rule { background: #a9c0d3; }
.head .dots { color: #cfc5b0; font-size: 13px; }
.head .section { background: #1b3859; color: #b99a63; font-size: 12px; font-weight: 700; font-style: italic; text-align: left; padding-left: 15px; }
.head.head .r7 td { background: #496b8d; color: #fff; font-family: Calibri, Carlito, Lato, sans-serif; font-weight: 700; border-bottom: 2px solid #8f8b80; font-size: 12px; }
.head.head .r7 .freeze { background: #fff; border-bottom: 1px solid #8f8b80; }

.data tr, .empty tr { height: 17px; line-height: 15px; }
.data tr:nth-child(3n), .empty tr:nth-child(3n) { height: 16px; }
.data td, .empty td { border-right: 1px solid #dfe4e8; border-bottom: 1px solid #e4eaef; }
.cells .data td { padding: 0 3px 0 2px; }
.data tr:nth-child(even) td, .empty tr:nth-child(odd) td { background: #d3e2ef; border-color: #d3e2ef; }
.data td:nth-of-type(1), .data td:nth-of-type(5) { text-align: right; }
.cells .data td:nth-of-type(2) { padding-top: 2px; background: #e8dcc2; border-color: #e8dcc2; color: #8b6c1c; font-family: Georgia, Gelasio, "Liberation Serif", serif; font-weight: 700; font-style: italic; font-size: 11px; line-height: 13px; text-align: right; }
.cells .data .soon:nth-of-type(2) { background: #f5dcdf; border-color: #f5dcdf; color: #9a2a45; }
.foot td { border-bottom: 1px solid #dfe6ea; }
.foot .leaf { color: #b99a63; font-size: 14px; }
.foot .crafted { color: #b99a63; font-size: 10px; font-weight: 700; font-style: italic; }

/* sheet tabs */
.tabs { display: flex; flex: none; height: 30px; border-top: 1px solid #555; border-bottom: 1px solid #000; background: #2d2d2d; }
.tab-nav { display: flex; align-items: center; gap: 17px; width: 67px; padding-left: 17px; flex: none; }
.tab-nav button { color: #a8a8a8; }
.tab-nav .dim { color: #636363; }
.tri12 { width: 8px; height: 12px; fill: currentColor; }
.tab-list { display: flex; flex: 1; min-width: 0; gap: 1px; padding-left: 1px; overflow: hidden; margin-top: -1px; background: #4a4a4a; mask-image: linear-gradient(to right, #000 calc(100% - 34px), transparent); }
.tab { flex: none; height: 29px; padding: 0 16px; border: 3px solid #1c1c1c; font: 500 14px/20px "Liberation Sans", Arial, sans-serif; color: #111; white-space: nowrap; }
.tab:nth-child(-n+3) { padding: 0 15px; }
.gold { background: #b99a68; }
.cream { background: #e8dcc2; }
.navy { background: #1b3859; color: #eef3f8; }
.sky { background: #7ba4c9; }
.sage { background: #9ab99c; }
.steel { background: #496b8d; color: #eef3f8; }
.mist { background: #dfe6dd; }
.slate { background: #2a3f53; color: #eef3f8; }
.rose { background: #e8b4b8; }
.tab.active { height: 25px; padding: 6px 20px 0; background: linear-gradient(#fff, #e0d5c4); border-color: #fff; border-top-width: 0; color: #2f8353; font-size: 13px; line-height: 16px; font-weight: 700; }
.add { display: flex; align-items: center; justify-content: center; flex: none; width: 43px; height: 24px; margin-right: 34px; border-left: 1px solid #555; border-right: 1px solid #555; color: #a8a8a8; }

/* status bar */
.status { display: flex; align-items: center; flex: none; height: 30px; padding: 0 27px; font-size: 13px; color: #d6d6d6; }
.access { display: flex; align-items: center; gap: 7px; margin-left: 23px; }
.access .i20 { width: 18px; color: #fff; }
.views { display: flex; gap: 6px; margin-left: auto; }
.view { display: flex; align-items: center; justify-content: center; width: 34px; height: 25px; border-radius: 3px; color: #f0f0f0; }
.view.on { background: #5f5f5f; }
.zoom { display: flex; align-items: center; gap: 7px; margin-left: 11px; color: #fff; }
.zoom input { appearance: none; width: 111px; height: 20px; }
.zoom input::-webkit-slider-runnable-track { height: 4px; border-radius: 2px; background: #5f5f5f; }
.zoom input::-webkit-slider-thumb { appearance: none; width: 20px; height: 16px; margin-top: -6px; border-radius: 8px; background: #e6e6e6; }
.pct { margin-left: 12px; color: #d6d6d6; }

/* floating preview */
.preview { position: fixed; right: 13px; bottom: 113px; width: 169px; padding: 5px; border-radius: 6px; background: #000; box-shadow: 0 0 36px rgba(0, 0, 0, .16); }
.preview svg { width: 100%; }
```
